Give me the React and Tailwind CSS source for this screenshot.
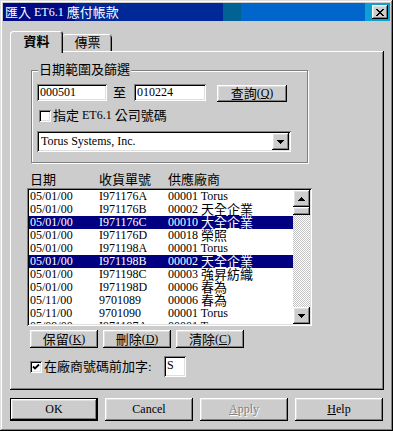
import React from 'react';

const raised = 'bg-[#cccccc] shadow-[inset_-1px_-1px_#000,inset_1px_1px_#fff,inset_-2px_-2px_#808080,inset_2px_2px_#dfdfdf]';
const sunken = 'bg-white shadow-[inset_1px_1px_#808080,inset_-1px_-1px_#fff,inset_2px_2px_#000,inset_-2px_-2px_#dfdfdf]';

// wrap CJK runs so they render a bit larger, like the bitmap font
function T({ children }) {
  const parts = String(children).split(/([\u3000-\u9fff\uff00-\uffef]+)/);
  return parts.map((p, i) =>
    i % 2 ? (
      <span key={i} className="inline-block align-top text-[13px] leading-[13px]">{p}</span>
    ) : (
      <React.Fragment key={i}>{p}</React.Fragment>
    )
  );
}

function Arrow({ down }) {
  return (
    <svg width="7" height="4" viewBox="0 0 7 4" shapeRendering="crispEdges">
      {down ? (
        <>
          <rect x="0" y="0" width="7" height="1" fill="#000" />
          <rect x="1" y="1" width="5" height="1" fill="#000" />
          <rect x="2" y="2" width="3" height="1" fill="#000" />
          <rect x="3" y="3" width="1" height="1" fill="#000" />
        </>
      ) : (
        <>
          <rect x="3" y="0" width="1" height="1" fill="#000" />
          <rect x="2" y="1" width="3" height="1" fill="#000" />
          <rect x="1" y="2" width="5" height="1" fill="#000" />
          <rect x="0" y="3" width="7" height="1" fill="#000" />
        </>
      )}
    </svg>
  );
}

function Check({ checked }) {
  return (
    <div className={`w-[12px] h-[12px] shrink-0 flex items-center justify-center ${sunken}`}>
      {checked && (
        <svg width="8" height="8" viewBox="0 0 8 8">
          <polyline points="1,3.5 3,5.5 7,1.5" fill="none" stroke="#000" strokeWidth="1.8" />
        </svg>
      )}
    </div>
  );
}

const rows = [
  ['05/01/00', 'I971176A', '00001 Torus'],
  ['05/01/00', 'I971176B', '00002 天全企業'],
  ['05/01/00', 'I971176C', '00010 大全企業', true],
  ['05/01/00', 'I971176D', '00018 榮照'],
  ['05/01/00', 'I971198A', '00001 Torus'],
  ['05/01/00', 'I971198B', '00002 天全企業', true],
  ['05/01/00', 'I971198C', '00003 強昇紡織'],
  ['05/01/00', 'I971198D', '00006 春為'],
  ['05/11/00', '9701089', '00006 春為'],
  ['05/11/00', '9701090', '00001 Torus'],
  ['05/09/00', 'I971197A', '00001 Torus'],
];

export default function App() {
  return (
    <div className="w-[393px] h-[431px] p-[3px] flex flex-col bg-[#cccccc] text-black text-[12px] leading-[13px] font-['Liberation_Serif','Noto_Sans_CJK_TC',serif] shadow-[inset_-1px_-1px_#000,inset_1px_1px_#dfdfdf,inset_-2px_-2px_#808080,inset_2px_2px_#fff]">
      {/* title bar */}
      <div className="h-[18px] flex items-center pl-[2px] pr-[2px] text-white bg-[linear-gradient(90deg,#000a84_0_72px,#002896_72px_220px,#006394_220px_238px,#0066cc_238px_362px,#0e9fd4_362px)]">
        <span className="mt-[1px]"><T>匯入 ET6.1 應付帳款</T></span>
        <div className={`ml-auto w-[16px] h-[14px] flex items-center justify-center ${raised}`}>
          <svg width="8" height="7" viewBox="0 0 8 7" shapeRendering="crispEdges">
            <path d="M0 0h2v1h-2zM6 0h2v1h-2zM1 1h2v1h-2zM5 1h2v1h-2zM2 2h4v1h-4zM3 3h2v1h-2zM2 4h4v1h-4zM1 5h2v1h-2zM5 5h2v1h-2zM0 6h2v1h-2zM6 6h2v1h-2z" fill="#000" />
          </svg>
        </div>
      </div>

      {/* tabs */}
      <div className="mt-[10px] ml-[7px] h-[20px] flex items-end">
        <div className="relative z-10 -mb-[2px] w-[53px] h-[22px] rounded-t-[3px] bg-[#cccccc] flex items-center justify-center pb-[2px] font-bold shadow-[inset_1px_1px_#fff,inset_-1px_0_#000,inset_-2px_0_#808080]">
          <span className="text-[13px]">資料</span>
        </div>
        <div className="w-[49px] h-[17px] rounded-t-[3px] flex items-center justify-center shadow-[inset_0_1px_#fff,inset_-1px_0_#000,inset_-2px_0_#808080]">
          <span className="text-[13px]">傳票</span>
        </div>
      </div>

      {/* tab panel */}
      <div className="ml-[7px] w-[374px] h-[339px] flex flex-col shadow-[inset_-1px_-1px_#000,inset_1px_1px_#fff,inset_-2px_-2px_#808080]">
        {/* group box */}
        <div className="relative mt-[19px] ml-[21px] w-[277px] h-[93px] border border-[#808080] shadow-[inset_1px_1px_#fff,1px_1px_#fff] pt-[13px] pl-[5px] flex flex-col">
          <div className="absolute -top-[8px] left-[6px] px-[1px] bg-[#cccccc] text-[13px]">日期範圍及篩選</div>
          <div className="flex items-start">
            <div className={`w-[70px] h-[17px] pl-[3px] pt-[2px] ${sunken}`}>000501</div>
            <div className="ml-[6px] w-[13px] h-[17px] flex items-center text-[13px]">至</div>
            <div className={`ml-[8px] w-[72px] h-[17px] pl-[3px] pt-[2px] ${sunken}`}>010224</div>
            <div className={`ml-[11px] mt-[1px] w-[70px] h-[17px] flex items-center justify-center ${raised}`}>
              <span><T>查詢</T>(<span className="underline">Q</span>)</span>
            </div>
          </div>
          <div className="mt-[7px] ml-[2px] h-[13px] flex items-center">
            <Check />
            <span className="ml-[2px]"><T>指定 ET6.1 公司號碼</T></span>
          </div>
          <div className={`mt-[9px] w-[254px] h-[21px] flex items-center p-[2px] ${sunken}`}>
            <span className="pl-[2px]">Torus Systems, Inc.</span>
            <div className={`ml-auto w-[17px] h-[17px] flex items-center justify-center ${raised}`}>
              <Arrow down />
            </div>
          </div>
        </div>

        {/* list header */}
        <div className="mt-[10px] ml-[20px] h-[13px] flex text-[13px]">
          <div className="w-[69px]">日期</div>
          <div className="w-[69px]">收貨單號</div>
          <div className="w-[69px]">供應廠商</div>
        </div>

        {/* list */}
        <div className={`mt-[2px] ml-[17px] w-[285px] h-[138px] p-[2px] flex ${sunken}`}>
          <div className="flex-1 overflow-hidden flex flex-col">
            {rows.map((r, i) => (
              <div key={i} className={`h-[13px] shrink-0 flex pl-[1px] whitespace-nowrap overflow-hidden ${r[3] ? 'bg-[#000080] text-white' : ''}`}>
                <div className="w-[69px]">{r[0]}</div>
                <div className="w-[69px]">{r[1]}</div>
                <div><T>{r[2]}</T></div>
              </div>
            ))}
          </div>
          <div className="w-[17px] flex flex-col">
            <div className={`h-[17px] flex items-center justify-center ${raised}`}><Arrow /></div>
            <div className={`h-[8px] ${raised}`} />
            <div className="flex-1 bg-[repeating-conic-gradient(#fff_0%_25%,#c4c4c4_0%_50%)] bg-[length:2px_2px]" />
            <div className={`h-[17px] flex items-center justify-center ${raised}`}><Arrow down /></div>
          </div>
        </div>

        {/* list buttons */}
        <div className="mt-[4px] ml-[20px] flex gap-[5px]">
          <div className={`w-[68px] h-[18px] flex items-center justify-center ${raised}`}>
            <span><T>保留</T>(<span className="underline">K</span>)</span>
          </div>
          <div className={`w-[68px] h-[18px] flex items-center justify-center ${raised}`}>
            <span><T>刪除</T>(<span className="underline">D</span>)</span>
          </div>
          <div className={`w-[68px] h-[18px] flex items-center justify-center ${raised}`}>
            <span><T>清除</T>(<span className="underline">C</span>)</span>
          </div>
        </div>

        {/* prefix option */}
        <div className="mt-[8px] ml-[20px] h-[21px] flex items-center">
          <Check checked />
          <span className="ml-[2px] w-[120px] text-[13px]">在廠商號碼前加字:</span>
          <div className={`w-[22px] h-[21px] pl-[3px] pt-[3px] ${sunken}`}>S</div>
        </div>
      </div>

      {/* dialog buttons */}
      <div className="mt-[8px] ml-[7px] flex gap-[7px]">
        <div className="w-[88px] h-[23px] flex items-center justify-center bg-[#cccccc] shadow-[inset_0_0_0_1px_#000,inset_-2px_-2px_#000,inset_2px_2px_#fff,inset_-3px_-3px_#808080,inset_3px_3px_#dfdfdf]">OK</div>
        <div className={`w-[88px] h-[23px] flex items-center justify-center ${raised}`}>Cancel</div>
        <div className={`w-[88px] h-[23px] flex items-center justify-center text-[#808080] [text-shadow:1px_1px_0_#fff] ${raised}`}>
          <span><span className="underline">A</span>pply</span>
        </div>
        <div className={`w-[88px] h-[23px] flex items-center justify-center ${raised}`}>
          <span><span className="underline">H</span>elp</span>
        </div>
      </div>
    </div>
  );
}
